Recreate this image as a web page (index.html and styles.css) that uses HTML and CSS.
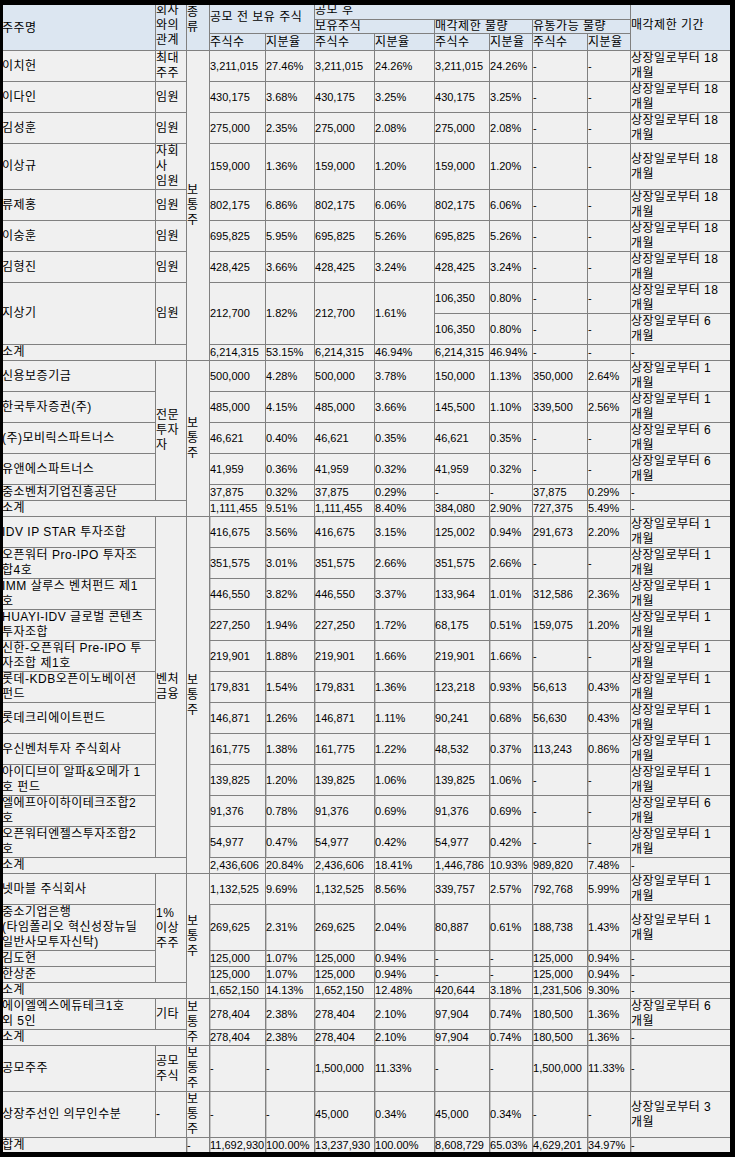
FILE: index.html
```html
<!DOCTYPE html>
<html lang="ko">
<head>
<meta charset="utf-8">
<title>매각제한 현황</title>
<link rel="stylesheet" href="styles.css">
</head>
<body>
<div class="screen">
<table class="t">
<colgroup>
<col class="w-name"><col class="w-rel"><col class="w-type"><col class="w-s1"><col class="w-p1"><col class="w-s2"><col class="w-p2"><col class="w-s3"><col class="w-p3"><col class="w-s4"><col class="w-p4"><col class="w-per">
</colgroup>
<thead>
<tr class="h1"><th rowspan="3" class="hn">주주명</th><th rowspan="3">회사<br>와의<br>관계</th><th rowspan="3" class="ht">종<br>류</th><th rowspan="2" colspan="2">공모 전 보유 주식</th><th colspan="6">공모 후</th><th rowspan="3">매각제한 기간</th></tr>
<tr class="h2"><th colspan="2">보유주식</th><th colspan="2">매각제한 물량</th><th colspan="2">유통가능 물량</th></tr>
<tr class="h3"><th>주식수</th><th>지분율</th><th>주식수</th><th>지분율</th><th>주식수</th><th>지분율</th><th>주식수</th><th>지분율</th></tr>
</thead>
<tbody>
<tr><td>이치헌</td><td>최대<br>주주</td><td rowspan="10">보<br>통<br>주</td><td class="n">3,211,015</td><td class="n">27.46%</td><td class="n">3,211,015</td><td class="n">24.26%</td><td class="n">3,211,015</td><td class="n">24.26%</td><td class="n">-</td><td class="n">-</td><td>상장일로부터 18<br>개월</td></tr>
<tr><td>이다인</td><td>임원</td><td class="n">430,175</td><td class="n">3.68%</td><td class="n">430,175</td><td class="n">3.25%</td><td class="n">430,175</td><td class="n">3.25%</td><td class="n">-</td><td class="n">-</td><td>상장일로부터 18<br>개월</td></tr>
<tr><td>김성훈</td><td>임원</td><td class="n">275,000</td><td class="n">2.35%</td><td class="n">275,000</td><td class="n">2.08%</td><td class="n">275,000</td><td class="n">2.08%</td><td class="n">-</td><td class="n">-</td><td>상장일로부터 18<br>개월</td></tr>
<tr><td>이상규</td><td>자회<br>사<br>임원</td><td class="n">159,000</td><td class="n">1.36%</td><td class="n">159,000</td><td class="n">1.20%</td><td class="n">159,000</td><td class="n">1.20%</td><td class="n">-</td><td class="n">-</td><td>상장일로부터 18<br>개월</td></tr>
<tr><td>류제홍</td><td>임원</td><td class="n">802,175</td><td class="n">6.86%</td><td class="n">802,175</td><td class="n">6.06%</td><td class="n">802,175</td><td class="n">6.06%</td><td class="n">-</td><td class="n">-</td><td>상장일로부터 18<br>개월</td></tr>
<tr><td>이숭훈</td><td>임원</td><td class="n">695,825</td><td class="n">5.95%</td><td class="n">695,825</td><td class="n">5.26%</td><td class="n">695,825</td><td class="n">5.26%</td><td class="n">-</td><td class="n">-</td><td>상장일로부터 18<br>개월</td></tr>
<tr><td>김형진</td><td>임원</td><td class="n">428,425</td><td class="n">3.66%</td><td class="n">428,425</td><td class="n">3.24%</td><td class="n">428,425</td><td class="n">3.24%</td><td class="n">-</td><td class="n">-</td><td>상장일로부터 18<br>개월</td></tr>
<tr><td rowspan="2">지상기</td><td rowspan="2">임원</td><td rowspan="2" class="n">212,700</td><td rowspan="2" class="n">1.82%</td><td rowspan="2" class="n">212,700</td><td rowspan="2" class="n">1.61%</td><td class="n">106,350</td><td class="n">0.80%</td><td class="n">-</td><td class="n">-</td><td>상장일로부터 18<br>개월</td></tr>
<tr><td class="n">106,350</td><td class="n">0.80%</td><td class="n">-</td><td class="n">-</td><td>상장일로부터 6<br>개월</td></tr>
<tr><td colspan="2">소계</td><td class="n">6,214,315</td><td class="n">53.15%</td><td class="n">6,214,315</td><td class="n">46.94%</td><td class="n">6,214,315</td><td class="n">46.94%</td><td class="n">-</td><td class="n">-</td><td class="n">-</td></tr>

<tr><td>신용보증기금</td><td rowspan="5">전문<br>투자<br>자</td><td rowspan="6">보<br>통<br>주</td><td class="n">500,000</td><td class="n">4.28%</td><td class="n">500,000</td><td class="n">3.78%</td><td class="n">150,000</td><td class="n">1.13%</td><td class="n">350,000</td><td class="n">2.64%</td><td>상장일로부터 1<br>개월</td></tr>
<tr><td>한국투자증권(주)</td><td class="n">485,000</td><td class="n">4.15%</td><td class="n">485,000</td><td class="n">3.66%</td><td class="n">145,500</td><td class="n">1.10%</td><td class="n">339,500</td><td class="n">2.56%</td><td>상장일로부터 1<br>개월</td></tr>
<tr><td>(주)모비릭스파트너스</td><td class="n">46,621</td><td class="n">0.40%</td><td class="n">46,621</td><td class="n">0.35%</td><td class="n">46,621</td><td class="n">0.35%</td><td class="n">-</td><td class="n">-</td><td>상장일로부터 6<br>개월</td></tr>
<tr><td>유앤에스파트너스</td><td class="n">41,959</td><td class="n">0.36%</td><td class="n">41,959</td><td class="n">0.32%</td><td class="n">41,959</td><td class="n">0.32%</td><td class="n">-</td><td class="n">-</td><td>상장일로부터 6<br>개월</td></tr>
<tr><td>중소벤처기업진흥공단</td><td class="n">37,875</td><td class="n">0.32%</td><td class="n">37,875</td><td class="n">0.29%</td><td class="n">-</td><td class="n">-</td><td class="n">37,875</td><td class="n">0.29%</td><td class="n">-</td></tr>
<tr><td colspan="2">소계</td><td class="n">1,111,455</td><td class="n">9.51%</td><td class="n">1,111,455</td><td class="n">8.40%</td><td class="n">384,080</td><td class="n">2.90%</td><td class="n">727,375</td><td class="n">5.49%</td><td class="n">-</td></tr>

<tr class="v"><td>IDV IP STAR 투자조합</td><td rowspan="11">벤처<br>금융</td><td rowspan="12">보<br>통<br>주</td><td class="n">416,675</td><td class="n">3.56%</td><td class="n">416,675</td><td class="n">3.15%</td><td class="n">125,002</td><td class="n">0.94%</td><td class="n">291,673</td><td class="n">2.20%</td><td>상장일로부터 1<br>개월</td></tr>
<tr class="v"><td>오픈워터 Pro-IPO 투자조<br>합4호</td><td class="n">351,575</td><td class="n">3.01%</td><td class="n">351,575</td><td class="n">2.66%</td><td class="n">351,575</td><td class="n">2.66%</td><td class="n">-</td><td class="n">-</td><td>상장일로부터 1<br>개월</td></tr>
<tr class="v"><td>IMM 살루스 벤처펀드 제1<br>호</td><td class="n">446,550</td><td class="n">3.82%</td><td class="n">446,550</td><td class="n">3.37%</td><td class="n">133,964</td><td class="n">1.01%</td><td class="n">312,586</td><td class="n">2.36%</td><td>상장일로부터 1<br>개월</td></tr>
<tr class="v"><td>HUAYI-IDV 글로벌 콘텐츠<br>투자조합</td><td class="n">227,250</td><td class="n">1.94%</td><td class="n">227,250</td><td class="n">1.72%</td><td class="n">68,175</td><td class="n">0.51%</td><td class="n">159,075</td><td class="n">1.20%</td><td>상장일로부터 1<br>개월</td></tr>
<tr class="v"><td>신한-오픈워터 Pre-IPO 투<br>자조합 제1호</td><td class="n">219,901</td><td class="n">1.88%</td><td class="n">219,901</td><td class="n">1.66%</td><td class="n">219,901</td><td class="n">1.66%</td><td class="n">-</td><td class="n">-</td><td>상장일로부터 1<br>개월</td></tr>
<tr class="v"><td>롯데-KDB오픈이노베이션<br>펀드</td><td class="n">179,831</td><td class="n">1.54%</td><td class="n">179,831</td><td class="n">1.36%</td><td class="n">123,218</td><td class="n">0.93%</td><td class="n">56,613</td><td class="n">0.43%</td><td>상장일로부터 1<br>개월</td></tr>
<tr class="v"><td>롯데크리에이트펀드</td><td class="n">146,871</td><td class="n">1.26%</td><td class="n">146,871</td><td class="n">1.11%</td><td class="n">90,241</td><td class="n">0.68%</td><td class="n">56,630</td><td class="n">0.43%</td><td>상장일로부터 1<br>개월</td></tr>
<tr class="v"><td>우신벤처투자 주식회사</td><td class="n">161,775</td><td class="n">1.38%</td><td class="n">161,775</td><td class="n">1.22%</td><td class="n">48,532</td><td class="n">0.37%</td><td class="n">113,243</td><td class="n">0.86%</td><td>상장일로부터 1<br>개월</td></tr>
<tr class="v"><td>아이디브이 알파&amp;오메가 1<br>호 펀드</td><td class="n">139,825</td><td class="n">1.20%</td><td class="n">139,825</td><td class="n">1.06%</td><td class="n">139,825</td><td class="n">1.06%</td><td class="n">-</td><td class="n">-</td><td>상장일로부터 1<br>개월</td></tr>
<tr class="v"><td>엘에프아이하이테크조합2<br>호</td><td class="n">91,376</td><td class="n">0.78%</td><td class="n">91,376</td><td class="n">0.69%</td><td class="n">91,376</td><td class="n">0.69%</td><td class="n">-</td><td class="n">-</td><td>상장일로부터 6<br>개월</td></tr>
<tr class="v"><td>오픈워터엔젤스투자조합2<br>호</td><td class="n">54,977</td><td class="n">0.47%</td><td class="n">54,977</td><td class="n">0.42%</td><td class="n">54,977</td><td class="n">0.42%</td><td class="n">-</td><td class="n">-</td><td>상장일로부터 1<br>개월</td></tr>
<tr><td colspan="2">소계</td><td class="n">2,436,606</td><td class="n">20.84%</td><td class="n">2,436,606</td><td class="n">18.41%</td><td class="n">1,446,786</td><td class="n">10.93%</td><td class="n">989,820</td><td class="n">7.48%</td><td class="n">-</td></tr>

<tr><td>넷마블 주식회사</td><td rowspan="4">1%<br>이상<br>주주</td><td rowspan="5">보<br>통<br>주</td><td class="n">1,132,525</td><td class="n">9.69%</td><td class="n">1,132,525</td><td class="n">8.56%</td><td class="n">339,757</td><td class="n">2.57%</td><td class="n">792,768</td><td class="n">5.99%</td><td>상장일로부터 1<br>개월</td></tr>
<tr class="v"><td>중소기업은행<br>(타임폴리오 혁신성장뉴딜<br>일반사모투자신탁)</td><td class="n">269,625</td><td class="n">2.31%</td><td class="n">269,625</td><td class="n">2.04%</td><td class="n">80,887</td><td class="n">0.61%</td><td class="n">188,738</td><td class="n">1.43%</td><td>상장일로부터 1<br>개월</td></tr>
<tr class="v"><td>김도현</td><td class="n">125,000</td><td class="n">1.07%</td><td class="n">125,000</td><td class="n">0.94%</td><td class="n">-</td><td class="n">-</td><td class="n">125,000</td><td class="n">0.94%</td><td class="n">-</td></tr>
<tr class="v"><td>한상준</td><td class="n">125,000</td><td class="n">1.07%</td><td class="n">125,000</td><td class="n">0.94%</td><td class="n">-</td><td class="n">-</td><td class="n">125,000</td><td class="n">0.94%</td><td class="n">-</td></tr>
<tr><td colspan="2">소계</td><td class="n">1,652,150</td><td class="n">14.13%</td><td class="n">1,652,150</td><td class="n">12.48%</td><td class="n">420,644</td><td class="n">3.18%</td><td class="n">1,231,506</td><td class="n">9.30%</td><td class="n">-</td></tr>

<tr class="v"><td>에이엘엑스에듀테크1호<br>외 5인</td><td>기타</td><td rowspan="2">보<br>통<br>주</td><td class="n">278,404</td><td class="n">2.38%</td><td class="n">278,404</td><td class="n">2.10%</td><td class="n">97,904</td><td class="n">0.74%</td><td class="n">180,500</td><td class="n">1.36%</td><td>상장일로부터 6<br>개월</td></tr>
<tr class="v"><td colspan="2">소계</td><td class="n">278,404</td><td class="n">2.38%</td><td class="n">278,404</td><td class="n">2.10%</td><td class="n">97,904</td><td class="n">0.74%</td><td class="n">180,500</td><td class="n">1.36%</td><td class="n">-</td></tr>

<tr class="v"><td>공모주주</td><td>공모<br>주식</td><td>보<br>통<br>주</td><td class="n">-</td><td class="n">-</td><td class="n">1,500,000</td><td class="n">11.33%</td><td class="n">-</td><td class="n">-</td><td class="n">1,500,000</td><td class="n">11.33%</td><td class="n">-</td></tr>
<tr class="v"><td>상장주선인 의무인수분</td><td>-</td><td>보<br>통<br>주</td><td class="n">-</td><td class="n">-</td><td class="n">45,000</td><td class="n">0.34%</td><td class="n">45,000</td><td class="n">0.34%</td><td class="n">-</td><td class="n">-</td><td>상장일로부터 3<br>개월</td></tr>
<tr class="v"><td colspan="2">합계</td><td class="n">-</td><td class="n">11,692,930</td><td class="n">100.00%</td><td class="n">13,237,930</td><td class="n">100.00%</td><td class="n">8,608,729</td><td class="n">65.03%</td><td class="n">4,629,201</td><td class="n">34.97%</td><td class="n">-</td></tr>
</tbody>
</table>
</div>
</body>
</html>
```

FILE: styles.css
```css
html, body {
  margin: 0;
  padding: 0;
  background: #000;
}

.screen {
  position: relative;
  width: 735px;
  height: 1157px;
  overflow: hidden;
  background: #f0f0f0;
}

.screen::after {
  content: "";
  position: absolute;
  inset: 0;
  border-style: solid;
  border-color: #000;
  border-width: 5px 5px 5px 3px;
  pointer-events: none;
}

.t {
  border-collapse: collapse;
  table-layout: fixed;
  width: 734px;
  margin: 0 0 0 1px;
  font-family: "Liberation Sans", "Noto Sans CJK KR", sans-serif;
  font-size: 12px;
  line-height: 15px;
  letter-spacing: 0.5px;
  color: #000;
  background: #f0f0f0;
}

.w-name { width: 154px; }
.w-rel { width: 31px; }
.w-type { width: 23px; }
.w-s1 { width: 56px; }
.w-p1 { width: 49px; }
.w-s2 { width: 60px; }
.w-p2 { width: 60px; }
.w-s3 { width: 55px; }
.w-p3 { width: 43px; }
.w-s4 { width: 55px; }
.w-p4 { width: 43px; }
.w-per { width: 105px; }

.t th,
.t td {
  border: 1px solid #808080;
  padding: 0;
  text-align: left;
  vertical-align: middle;
  white-space: nowrap;
  overflow: hidden;
  font-weight: normal;
}

.t th {
  background: #dce6f1;
}

.t td {
  background: #f0f0f0;
}

.h1 { height: 19px; }
.h2 { height: 14px; }
.h3 { height: 17px; }

.h2 th {
  line-height: 13px;
}

.t th.hn {
  padding-top: 5px;
}

.t th.ht {
  vertical-align: top;
  padding-top: 4px;
}

.t .n {
  font-size: 11px;
  letter-spacing: 0;
}

.v .n {
  box-shadow: inset 1px 0 0 #c4c4c4;
}
```
